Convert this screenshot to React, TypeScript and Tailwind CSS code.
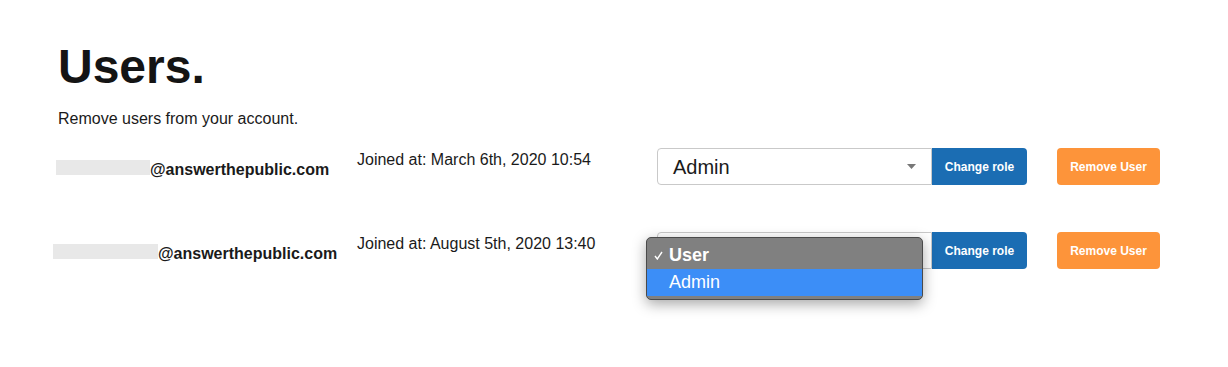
import React from "react";

type Row = { bar: number; shift: number; joined: string; role: string; open?: boolean };

const rows: Row[] = [
  { bar: 94, shift: 2, joined: "Joined at: March 6th, 2020 10:54", role: "Admin" },
  { bar: 105, shift: 5, joined: "Joined at: August 5th, 2020 13:40", role: "User", open: true },
];

function Arrow() {
  return (
    <svg width="9" height="5" viewBox="0 0 9 5" className="shrink-0">
      <polygon points="0,0 9,0 4.5,5" fill="#777" />
    </svg>
  );
}

function Dropdown() {
  return (
    <div className="absolute left-[-11px] top-[5px] w-[277px] h-[63px] rounded-[5px] border border-[#4a4a4a] bg-[#808080] pt-[4px] shadow-[0_4px_14px_rgba(0,0,0,0.35)] overflow-hidden z-10">
      <div className="h-[27px] flex items-center text-white text-[18px] font-bold">
        <span className="w-[22px] flex justify-end pr-[6px]">
          <svg width="9" height="9" viewBox="0 0 9 9">
            <polyline points="1,5 3.3,8 8,1" fill="none" stroke="#fff" strokeWidth="1.4" />
          </svg>
        </span>
        <span>User</span>
      </div>
      <div className="h-[27px] flex items-center bg-[#3c8ef7] text-white text-[18px] pl-[22px]">
        Admin
      </div>
    </div>
  );
}

export default function App() {
  return (
    <div
      className="bg-white w-[1228px] h-[367px] px-[58px] pt-[43px] text-[#1a1a1a]"
      style={{ fontFamily: '"Liberation Sans", Arial, Helvetica, sans-serif' }}
    >
      <h1 className="text-[48px] font-bold leading-[48px] text-[#141414]">Users.</h1>
      <p className="mt-[16px] text-[16px] leading-[24px]">Remove users from your account.</p>
      <div className="mt-[17px] flex flex-col gap-[47px]">
        {rows.map((r, i) => (
          <div key={i} className="flex items-start h-[37px]">
            <div className="w-[299px] shrink-0 pt-[10px]">
              <div
                className="text-[16px] leading-[24px] font-bold whitespace-nowrap"
                style={{ marginLeft: -r.shift }}
              >
                <span
                  className="inline-block h-[15px] bg-[#e8e8e8]"
                  style={{ width: r.bar }}
                />
                @answerthepublic.com
              </div>
            </div>
            <div className="w-[300px] shrink-0 text-[16px] leading-[24px] whitespace-nowrap">
              {r.joined}
            </div>
            <div className="relative w-[275px] h-[37px] shrink-0">
              <div className="h-full flex items-center justify-between border border-[#c9c9c9] rounded-l-[4px] bg-white pl-[15px] pr-[15px] text-[20px]">
                <span className={r.open ? "invisible" : ""}>{r.role}</span>
                <Arrow />
              </div>
              {r.open && <Dropdown />}
            </div>
            <button className="w-[95px] h-[37px] shrink-0 bg-[#1b6db3] text-white text-[12px] font-bold rounded-r-[4px]">
              Change role
            </button>
            <button className="ml-[30px] w-[103px] h-[37px] shrink-0 bg-[#fd943a] text-white text-[12px] font-bold rounded-[4px]">
              Remove User
            </button>
          </div>
        ))}
      </div>
    </div>
  );
}
